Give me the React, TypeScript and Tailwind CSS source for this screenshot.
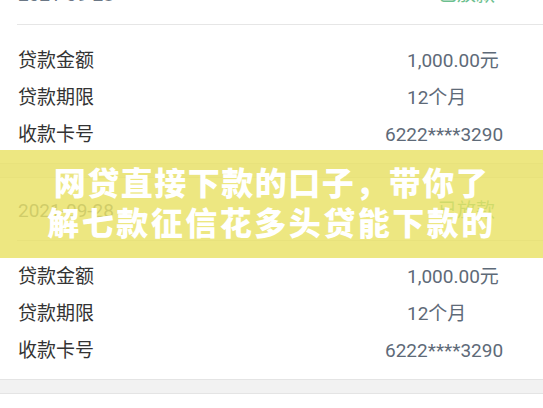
const font = { fontFamily: "Roboto, 'Noto Sans CJK SC', sans-serif" };

type Row = { label: string; value: string; wide?: boolean };

const rows: Row[] = [
  { label: '贷款金额', value: '1,000.00元' },
  { label: '贷款期限', value: '12个月' },
  { label: '收款卡号', value: '6222****3290', wide: true },
];

function LoanCard({ date }: { date: string }) {
  return (
    <div className="bg-white">
      <div className="h-[62px] flex items-center justify-between pl-[18px] pr-[48px] pt-[4px]">
        <span className="text-[19px] text-[#6b7785]">{date}</span>
        <span className="text-[19px] text-[#6cbf8e]">已放款</span>
      </div>
      <div className="ml-[17px] border-b border-[#e6e6e6]" />
      <div className="pt-[18px] pb-[9px]">
        {rows.map((r) => (
          <div key={r.label} className="h-[37px] flex items-center pl-[18px]">
            <span className="flex-1 text-[19px] text-[#333333]">{r.label}</span>
            <span
              className={
                r.wide
                  ? 'w-[158px] pl-0 text-[19px] text-[#5e6a78]'
                  : 'w-[158px] pl-[22px] text-[19px] text-[#5e6a78]'
              }
            >
              {r.value}
            </span>
          </div>
        ))}
      </div>
    </div>
  );
}

function Gap() {
  return <div className="h-[15px] bg-[#f2f2f2] border-y border-[#e4e4e4]" />;
}

export default function App() {
  return (
    <div className="relative w-[543px] h-[408px] overflow-hidden bg-white" style={font}>
      <div className="mt-[-38px] flex flex-col">
        <LoanCard date="2021-09-28" />
        <Gap />
        <LoanCard date="2021-09-28" />
        <Gap />
        <div className="h-[40px] bg-white" />
      </div>
      <div className="absolute left-0 right-0 top-[150px] h-[108px] bg-[rgba(232,225,97,0.8)] flex flex-col items-center justify-center">
        <div className="text-white font-black text-[32px] leading-[40px] tracking-[1.5px] whitespace-nowrap">
          网贷直接下款的口子，带你了
        </div>
        <div className="text-white font-black text-[32px] leading-[40px] tracking-[2.5px] whitespace-nowrap">
          解七款征信花多头贷能下款的
        </div>
      </div>
    </div>
  );
}
